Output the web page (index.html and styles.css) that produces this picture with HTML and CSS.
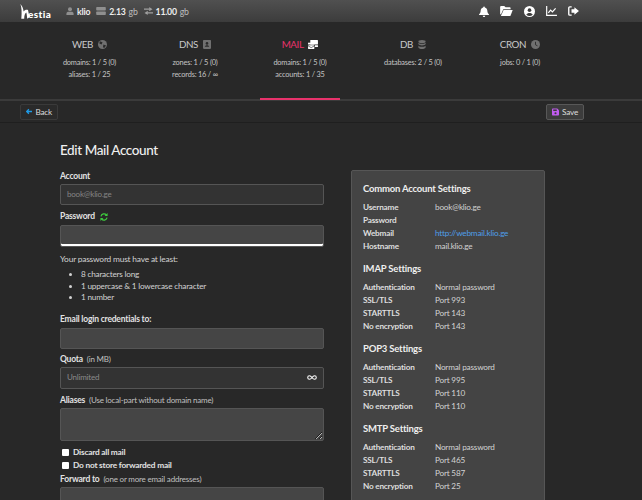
FILE: index.html
```html
<!DOCTYPE html>
<html lang="en">
<head>
<meta charset="utf-8">
<title>Edit Mail Account</title>
<link rel="stylesheet" href="styles.css">
</head>
<body>
<header class="topbar">
  <div class="logo">
    <svg class="logo-mark" viewBox="0 0 10 15" width="10" height="15"><path d="M0.300 0C2.500 2 3.300 5 3.600 7.500C4.500 6 6.500 5.500 8 6C8.500 8.500 9 11 9.800 13L7.300 14.800C6.800 12.500 6.800 10 6.300 8.500C5 9 4.300 11 4.200 14.800L1.300 14.800C2 8 1.600 3 0.300 0Z" fill="#fff"/></svg>
    <span class="logo-text">estia</span>
  </div>
  <div class="stat">
    <svg class="stat-icon" viewBox="0 0 10 10" width="8" height="8"><circle cx="5" cy="2.800" r="2.500" fill="#8f8f8f"/><path d="M0.500 10V8.500C0.500 6.800 2 6 3 6H7C8 6 9.500 6.800 9.500 8.500V10Z" fill="#8f8f8f"/></svg>
    <b>klio</b>
  </div>
  <div class="stat">
    <svg class="stat-icon" viewBox="0 0 12 10" width="10" height="8"><rect x="0" y="0" width="12" height="4.500" rx="1" fill="#8f8f8f"/><rect x="0" y="5.500" width="12" height="4.500" rx="1" fill="#8f8f8f"/></svg>
    <b>2.13</b> <span class="unit">gb</span>
  </div>
  <div class="stat">
    <svg class="stat-icon" viewBox="0 0 12 10" width="9" height="8"><path d="M0 2.500H9M7 0.500L10 2.500L7 4.500M12 7.500H3M5 5.500L2 7.500L5 9.500" fill="none" stroke="#a0a0a0" stroke-width="1.500"/></svg>
    <b>11.00</b> <span class="unit">gb</span>
  </div>
  <nav class="top-icons">
    <svg viewBox="0 0 12 13" width="10" height="11"><path d="M6 0.500C6.500 0.500 7 1 7 1.600C9 2 10 3.800 10 5.500C10 8 11 9 12 10V10.800H0V10C1 9 2 8 2 5.500C2 3.800 3 2 5 1.600C5 1 5.500 0.500 6 0.500Z" fill="#fff"/><path d="M4.500 11.500H7.500C7.500 12.500 6.800 13 6 13S4.500 12.500 4.500 11.500Z" fill="#fff"/></svg>
    <svg viewBox="0 0 14 11" width="13" height="10"><path d="M0 1C0 .4 .4 0 1 0H4.500L6 1.500H10.500C11 1.500 11.500 2 11.500 2.500V3.500H3.500L1 9H0Z" fill="#fff"/><path d="M3.800 4.300H13.800L11.300 11H0.800Z" fill="#fff"/></svg>
    <svg viewBox="0 0 12 12" width="11" height="11"><circle cx="6" cy="6" r="6" fill="#fff"/><circle cx="6" cy="4.500" r="2" fill="#3d3d3d"/><path d="M2.500 9.500C3 8 4.500 7.500 6 7.500S9 8 9.500 9.500C8.500 10.500 7.300 11 6 11S3.500 10.500 2.500 9.500Z" fill="#3d3d3d"/></svg>
    <svg viewBox="0 0 12 11" width="11" height="10"><path d="M0.700 0V10.300H12" fill="none" stroke="#fff" stroke-width="1.300"/><path d="M2.500 7.500L5 4.500L7 6.500L10.500 2.500" fill="none" stroke="#fff" stroke-width="1.300"/></svg>
    <svg viewBox="0 0 12 11" width="11" height="10"><path d="M4 1H2C1.200 1 .8 1.500 .8 2V9C.8 9.500 1.200 10 2 10H4" fill="none" stroke="#fff" stroke-width="1.500"/><path d="M7 1.500L12 5.500L7 9.500V7.300H3.800V3.700H7Z" fill="#fff"/></svg>
  </nav>
</header>

<nav class="tabs">
  <div class="tab">
    <div class="tab-title">WEB <svg viewBox="0 0 10 10" width="9" height="9"><circle cx="5" cy="5" r="5" fill="#707070"/><path d="M2 1.500L5 2.500L4 5L1.500 4ZM6 5L9 6L7 9L5.500 8Z" fill="#2a2a2a"/></svg></div>
    <div class="tab-line">domains: 1 / 5 (0)</div>
    <div class="tab-line">aliases: 1 / 25</div>
  </div>
  <div class="tab">
    <div class="tab-title">DNS <svg viewBox="0 0 9 10" width="8" height="9"><path d="M1 0H8C8.500 0 9 .5 9 1V9C9 9.500 8.500 10 8 10H1C.5 10 0 9.500 0 9V1C0 .5 .5 0 1 0Z" fill="#707070"/><circle cx="4.500" cy="3.800" r="1.500" fill="#2a2a2a"/><path d="M2 7.500C2.500 6 3.500 5.800 4.500 5.800S6.500 6 7 7.500Z" fill="#2a2a2a"/></svg></div>
    <div class="tab-line">zones: 1 / 5 (0)</div>
    <div class="tab-line">records: 16 / ∞</div>
  </div>
  <div class="tab tab-active">
    <div class="tab-title">MAIL <svg viewBox="0 0 11 10" width="10" height="9"><rect x="2.500" y="0" width="8.500" height="5" rx=".6" fill="#fff"/><rect x="0" y="3" width="7" height="2" fill="#fff"/><rect x="0" y="5.800" width="7" height="4.200" rx=".5" fill="#fff"/><path d="M0 6.500L3.500 8.500L7 6.500" stroke="#282828" fill="none" stroke-width=".7"/><rect x="7.700" y="5.800" width="3.300" height="2" fill="#fff"/></svg></div>
    <div class="tab-line">domains: 1 / 5 (0)</div>
    <div class="tab-line">accounts: 1 / 35</div>
  </div>
  <div class="tab">
    <div class="tab-title">DB <svg viewBox="0 0 8 10" width="8" height="9"><ellipse cx="4" cy="1.700" rx="4" ry="1.700" fill="#707070"/><path d="M0 3V4.500C0 5.500 2 6 4 6S8 5.500 8 4.500V3C7 4 5.500 4.200 4 4.200S1 4 0 3Z" fill="#707070"/><path d="M0 6.300V8.300C0 9.300 2 10 4 10S8 9.300 8 8.300V6.300C7 7.300 5.500 7.500 4 7.500S1 7.300 0 6.300Z" fill="#707070"/></svg></div>
    <div class="tab-line">databases: 2 / 5 (0)</div>
  </div>
  <div class="tab">
    <div class="tab-title">CRON <svg viewBox="0 0 10 10" width="9" height="9"><circle cx="5" cy="5" r="5" fill="#707070"/><path d="M5 2V5.300L7.200 6.500" stroke="#2a2a2a" fill="none" stroke-width="1"/></svg></div>
    <div class="tab-line">jobs: 0 / 1 (0)</div>
  </div>
</nav>

<div class="toolbar">
  <a class="btn btn-back"><svg viewBox="0 0 10 9" width="8" height="7"><path d="M10 4.500H1.500M4.500 1L1 4.500L4.500 8" fill="none" stroke="#1f9be8" stroke-width="2"/></svg> Back</a>
  <a class="btn btn-save"><svg viewBox="0 0 10 10" width="8" height="8"><path d="M1 0H7.500L10 2.500V9C10 9.500 9.500 10 9 10H1C.5 10 0 9.500 0 9V1C0 .5 .5 0 1 0Z" fill="#c15cf0"/><rect x="1.800" y="1.300" width="5" height="2.300" fill="#3a3a3a"/><circle cx="5" cy="6.800" r="1.500" fill="#3a3a3a"/></svg> Save</a>
</div>

<main class="content">
  <form class="form">
    <h1 class="title">Edit Mail Account</h1>
    <label class="label label-first">Account</label>
    <div class="input input-disabled">book@klio.ge</div>
    <label class="label label-password">Password <svg class="sync" viewBox="0 0 10 10" width="8" height="8"><path d="M1.200 4.200A3.900 3.900 0 0 1 8 2.500M8.800 5.800A3.900 3.900 0 0 1 2 7.500" fill="none" stroke="#3ec93e" stroke-width="1.600"/><path d="M9.500 0V3.800H5.700ZM.5 10V6.200H4.300Z" fill="#3ec93e"/></svg></label>
    <div class="input input-password"></div>
    <p class="hint">Your password must have at least:</p>
    <ul class="rules">
      <li>8 characters long</li>
      <li>1 uppercase &amp; 1 lowercase character</li>
      <li>1 number</li>
    </ul>
    <label class="label label-email">Email login credentials to:</label>
    <div class="input"></div>
    <label class="label label-quota">Quota <span class="note">(in MB)</span></label>
    <div class="input input-quota">Unlimited <svg viewBox="0 0 14 7" width="10" height="5"><path d="M7 3.500C5.500 1.500 4.500 1 3.500 1A2.500 2.500 0 0 0 3.500 6C4.500 6 5.500 5.500 7 3.500C8.500 1.500 9.500 1 10.500 1A2.500 2.500 0 0 1 10.500 6C9.500 6 8.500 5.500 7 3.500Z" fill="none" stroke="#fff" stroke-width="1.500"/></svg></div>
    <label class="label">Aliases <span class="note">(Use local-part without domain name)</span></label>
    <textarea class="textarea"></textarea>
    <label class="check check-first"><span class="box"></span>Discard all mail</label>
    <label class="check"><span class="box"></span>Do not store forwarded mail</label>
    <label class="label label-forward">Forward to <span class="note">(one or more email addresses)</span></label>
    <div class="input"></div>
  </form>

  <aside class="panel">
    <h2 class="panel-title">Common Account Settings</h2>
    <dl class="rows">
      <dt>Username</dt><dd>book@klio.ge</dd>
      <dt>Password</dt><dd></dd>
      <dt>Webmail</dt><dd><a class="link">http://webmail.klio.ge</a></dd>
      <dt>Hostname</dt><dd>mail.klio.ge</dd>
    </dl>
    <h2 class="panel-title">IMAP Settings</h2>
    <dl class="rows">
      <dt>Authentication</dt><dd>Normal password</dd>
      <dt>SSL/TLS</dt><dd>Port 993</dd>
      <dt>STARTTLS</dt><dd>Port 143</dd>
      <dt>No encryption</dt><dd>Port 143</dd>
    </dl>
    <h2 class="panel-title">POP3 Settings</h2>
    <dl class="rows">
      <dt>Authentication</dt><dd>Normal password</dd>
      <dt>SSL/TLS</dt><dd>Port 995</dd>
      <dt>STARTTLS</dt><dd>Port 110</dd>
      <dt>No encryption</dt><dd>Port 110</dd>
    </dl>
    <h2 class="panel-title">SMTP Settings</h2>
    <dl class="rows">
      <dt>Authentication</dt><dd>Normal password</dd>
      <dt>SSL/TLS</dt><dd>Port 465</dd>
      <dt>STARTTLS</dt><dd>Port 587</dd>
      <dt>No encryption</dt><dd>Port 25</dd>
    </dl>
  </aside>
</main>
</body>
</html>
```

FILE: styles.css
```css
* { box-sizing: border-box; }
html, body { margin: 0; height: 500px; overflow: hidden; }
body {
  background: #282828;
  color: #d2d2d2;
  font-family: "Lato", sans-serif;
  font-size: 8.400px;
  letter-spacing: -0.2px;
}
.topbar {
  height: 22px;
  display: flex;
  align-items: center;
  background: linear-gradient(#505050, #3c3c3c);
  color: #e0e0e0;
  padding-left: 20px;
}
.logo { display: flex; align-items: flex-end; width: 46px; height: 18px; color: #fff; }
.logo-mark { display: block; margin-bottom: 1px; }
.logo-text { font-weight: 900; font-size: 10px; line-height: 11px; letter-spacing: .4px; margin-left: -2px; }
.stat { display: flex; align-items: center; gap: 3px; margin-right: 6px; font-size: 8.700px; }
.stat b { font-weight: 700; color: #eee; }
.unit { color: #bdbdbd; }
.stat-icon { display: block; }
.top-icons { margin-left: auto; margin-right: 63px; display: flex; align-items: center; gap: 11px; }
.top-icons svg { display: block; }

.tabs {
  height: 79px;
  display: grid;
  grid-template-columns: 81px 72px 80px 88px 68px;
  column-gap: 29px;
  padding-left: 49px;
  border-bottom: 2px solid #3b3b3b;
}
.tab { text-align: center; padding-top: 15px; height: 78px; }
.tab-active { border-bottom: 2px solid #e8326b; }
.tab-title { font-size: 9.800px; line-height: 14px; letter-spacing: -.4px; color: #c8c8c8; margin-bottom: 6px; }
.tab-title svg { margin-left: 3px; vertical-align: -1px; }
.tab-active .tab-title { color: #e8326b; }
.tab-line { font-size: 7.400px; line-height: 12px; color: #c4c4c4; }

.toolbar {
  height: 22px;
  display: flex;
  justify-content: space-between;
  align-items: center;
  padding: 0 58px 0 20px;
  border-bottom: 1px solid #1f1f1f;
}
.btn {
  display: flex;
  align-items: center;
  gap: 3px;
  width: 38px;
  height: 16px;
  padding: 0 5px;
  font-size: 8.200px;
  border-radius: 2px;
  color: #dcdcdc;
}
.btn-back { background: #2a2a2a; border: 1px solid #3a3a3a; }
.btn-save { background: #3c3c3c; border: 1px solid #585858; }

.content { display: flex; align-items: flex-start; padding-left: 60px; }
.form { width: 264px; flex: none; }
.title { margin: 19px 0 0; font-size: 13.500px; line-height: 16px; font-weight: 500; letter-spacing: -.4px; color: #f0f0f0; }
.label { display: block; font-size: 8.500px; line-height: 11px; font-weight: 700; color: #e2e2e2; margin: 6px 0 2px; }
.label-first { margin-top: 13px; }
.label-password { margin-top: 6px; margin-bottom: 3px; }
.label-email { margin-top: 10px; margin-bottom: 3px; }
.label-quota { margin-top: 5px; }
.label-forward { margin-top: 2px; margin-bottom: 2px; }
.sync { margin-left: 3px; vertical-align: -1.500px; }
.note { font-size: 8px; font-weight: 400; color: #c0c0c0; margin-left: 2px; }
.input {
  height: 21px;
  background: #454545;
  border: 1px solid #555;
  border-radius: 2px;
  padding: 0 6px;
  line-height: 19px;
  font-size: 8px;
  color: #c8c8c8;
}
.input-disabled { background: #333; color: #858585; }
.input-password { height: 22px; border-bottom-color: #555; box-shadow: inset 0 -2px 0 #fff; }
.input-quota {
  display: flex;
  justify-content: space-between;
  align-items: center;
  height: 22px;
  background: #333;
  color: #8a8a8a;
}
.hint { margin: 6px 0 0; line-height: 12px; }
.rules { margin: 4px 0 0; padding-left: 21px; font-size: 8.200px; line-height: 11.500px; }
.textarea {
  display: block;
  width: 100%;
  height: 33px;
  background: #454545;
  border: 1px solid #555;
  border-radius: 2px;
  margin: 0;
}
.check { display: flex; align-items: center; gap: 4px; height: 13px; font-size: 8.300px; font-weight: 700; color: #e2e2e2; padding-left: 2px; }
.check-first { margin-top: 5px; }
.box { width: 7px; height: 7px; background: #fff; border-radius: 1px; }

.panel {
  width: 194px;
  height: 340px;
  margin-left: 27px;
  margin-top: 47px;
  padding: 11px 11px;
  background: #444;
  border: 1px solid #565656;
  border-radius: 2px;
  flex: none;
}
.panel-title { margin: 0 0 6px; font-size: 9.500px; line-height: 13px; font-weight: 700; color: #eee; }
.rows {
  display: grid;
  grid-template-columns: 72px 1fr;
  grid-auto-rows: 13px;
  margin: 0 0 9px;
  font-size: 8.200px;
  line-height: 13px;
}
.rows dt { font-weight: 700; color: #dedede; }
.rows dd { margin: 0; color: #d2d2d2; }
.link { color: #4f9ee8; }
```
